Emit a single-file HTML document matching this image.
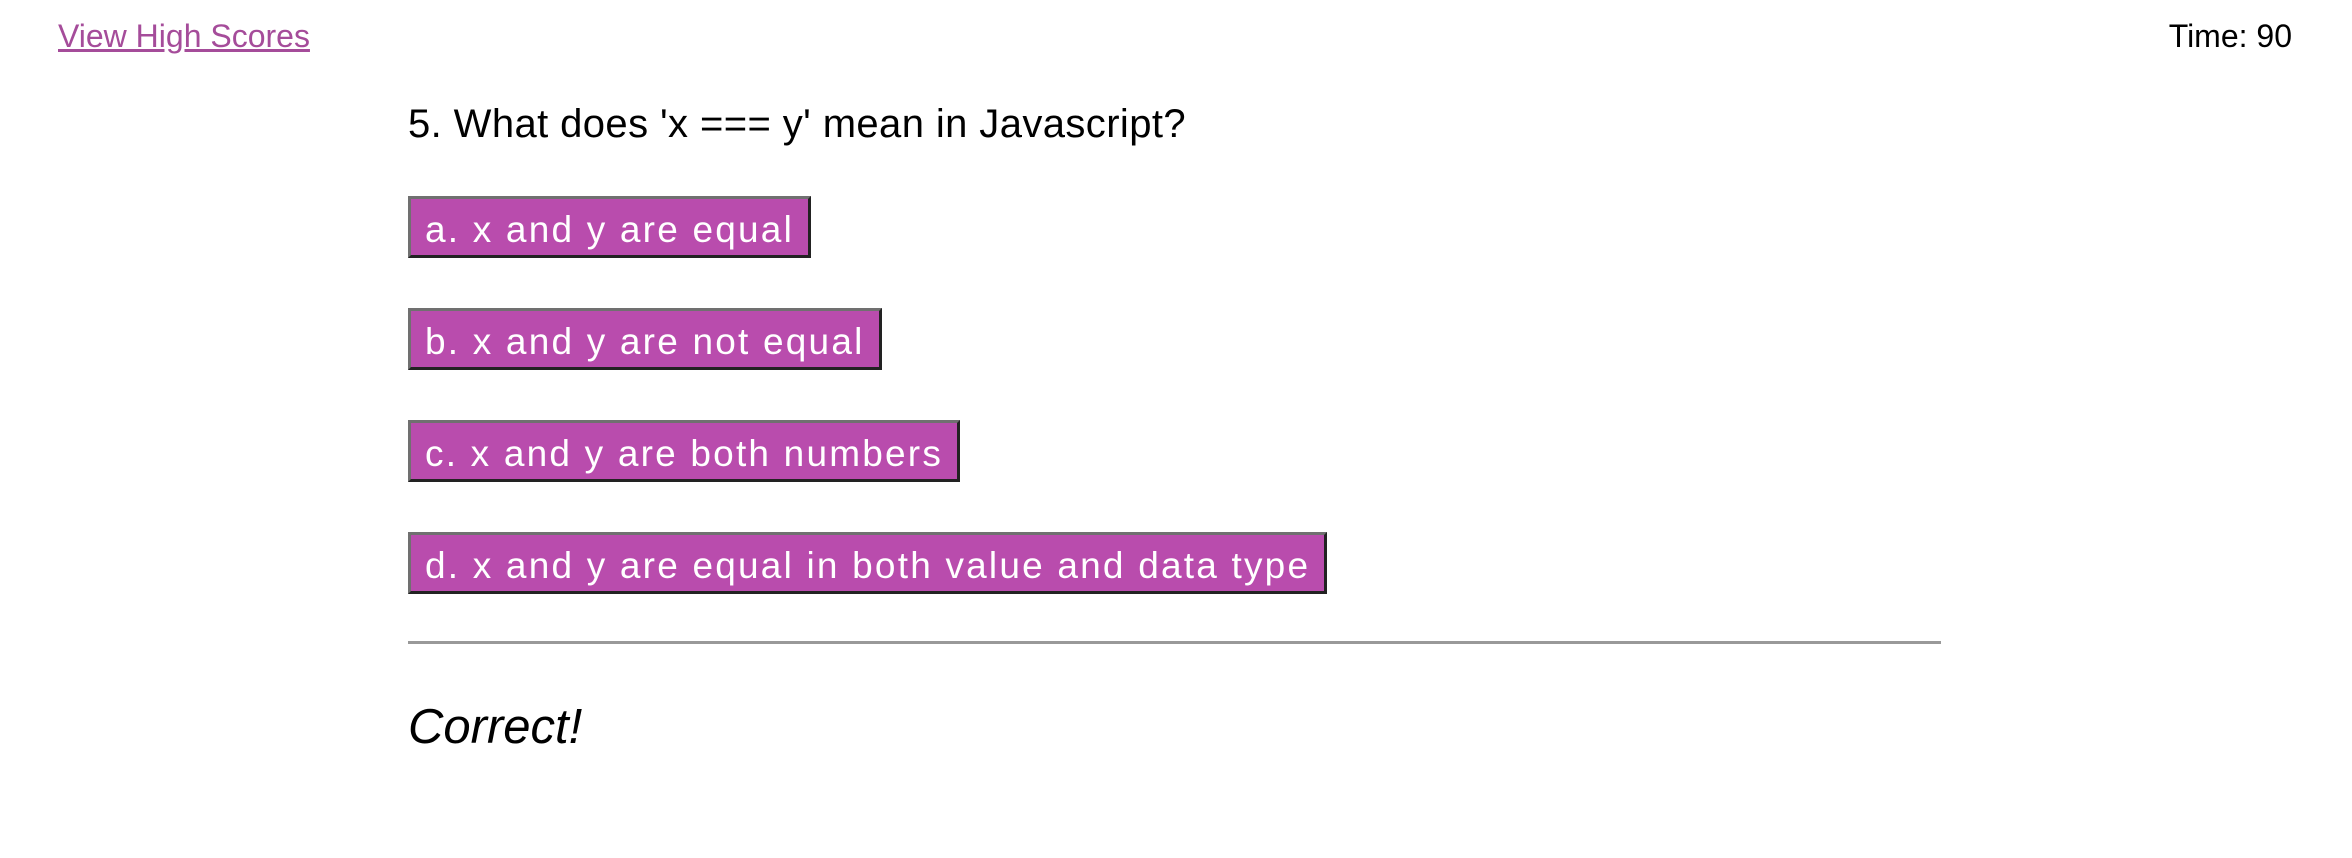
<!DOCTYPE html>
<html><head><meta charset="utf-8"><style>
body{margin:0;width:2352px;height:858px;background:#fff;font-family:"Liberation Sans",sans-serif;position:relative;overflow:hidden}
.a{position:absolute;white-space:nowrap}
#hs{left:58px;top:18px;font-size:32px;color:#a54c9a;text-decoration:underline}
#tm{right:60px;top:18px;font-size:32px;color:#000}
#q{left:408px;top:102px;font-size:40px;letter-spacing:0.4px;color:#000}
.b{position:absolute;left:408px;height:62px;box-sizing:border-box;background:#b94cad;color:#fff;font-size:37px;letter-spacing:2.2px;line-height:62px;padding:0 14px;border:3px solid;border-color:#707070 #222 #222 #707070;white-space:nowrap}
#hr{left:408px;top:641px;width:1533px;height:3px;background:#999}
#c{left:408px;top:699px;font-size:49px;font-style:italic;color:#000}
</style></head><body>
<div class="a" id="hs">View High Scores</div>
<div class="a" id="tm">Time: 90</div>
<div class="a" id="q">5. What does 'x === y' mean in Javascript?</div>
<div class="b" style="top:196px">a. x and y are equal</div>
<div class="b" style="top:308px">b. x and y are not equal</div>
<div class="b" style="top:420px">c. x and y are both numbers</div>
<div class="b" style="top:532px">d. x and y are equal in both value and data type</div>
<div class="a" id="hr"></div>
<div class="a" id="c">Correct!</div>
</body></html>
